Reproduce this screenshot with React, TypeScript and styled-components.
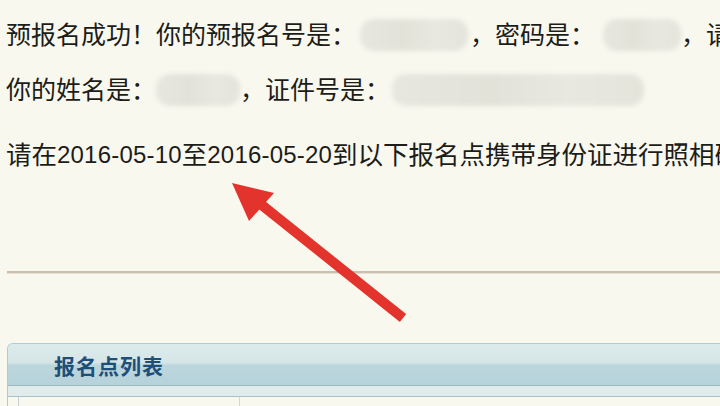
import React from "react";
import styled, { createGlobalStyle } from "styled-components";

const Global = createGlobalStyle`
  html, body { margin: 0; padding: 0; background: #f8f8ef; overflow: hidden; }
  body { width: 720px; height: 406px; }
`;

const Page = styled.div`
  position: relative;
  width: 720px;
  height: 406px;
  overflow: hidden;
  background: #f8f8ef;
  font-family: "Liberation Sans", "Noto Sans CJK SC", sans-serif;
  color: #1c1c18;
`;

const Content = styled.div`
  display: flex;
  flex-direction: column;
  padding-left: 6px;
`;

const Line = styled.div<{ $top: number; $size?: number }>`
  margin-top: ${(p) => p.$top}px;
  height: 30px;
  line-height: 30px;
  font-size: ${(p) => p.$size ?? 25}px;
  white-space: nowrap;
  display: flex;
  align-items: center;
`;

const DateText = styled.span`
  font-size: 24px;
  letter-spacing: 0.2px;
`;

const Blur = styled.span<{ $w: number; $ml: number; $mr: number }>`
  display: inline-block;
  flex: none;
  width: ${(p) => p.$w}px;
  height: 32px;
  margin-left: ${(p) => p.$ml}px;
  margin-right: ${(p) => p.$mr}px;
  border-radius: 14px;
  background: linear-gradient(90deg, #e8e7df 0%, #e3e2d9 40%, #e9e8e0 70%, #e5e4db 100%);
  filter: blur(2px);
`;

const Rule = styled.div`
  margin-top: 101px;
  margin-left: 1px;
  height: 2px;
  background: #cbbfae;
  border-bottom: 1px solid #e6dfd3;
`;

const Panel = styled.div`
  margin-top: 69px;
  margin-left: 1px;
  border: 1px solid #b3c9d1;
  border-right: none;
  border-top-left-radius: 6px;
  overflow: hidden;
`;

const PanelHead = styled.div`
  height: 41px;
  display: flex;
  align-items: center;
  padding-left: 46px;
  background: linear-gradient(180deg, #dceaea 0%, #d6e6e7 45%, #bcd6dd 52%, #b6d2da 100%);
  border-bottom: 1px solid #9dbac4;
`;

const PanelTitle = styled.span`
  font-family: "Noto Sans CJK SC", sans-serif;
  font-weight: 700;
  font-size: 21px;
  color: #1d4f78;
  letter-spacing: 1px;
`;

const PanelStrip = styled.div`
  height: 10px;
  background: #e0ecec;
  border-bottom: 1px solid #a9c1c9;
`;

const Table = styled.div`
  margin-left: 10px;
  display: grid;
  grid-template-columns: 221px 1fr;
  height: 20px;
  border-left: 1px solid #c4d2d6;
`;

const Cell = styled.div`
  border-right: 1px solid #d0d8d8;
`;

const Arrow = styled.svg`
  position: absolute;
  left: 0;
  top: 0;
  pointer-events: none;
`;

export default function App() {
  return (
    <Page>
      <Global />
      <Content>
        <Line $top={20}>
          预报名成功！你的预报名号是：
          <Blur $w={108} $ml={4} $mr={2} />
          ，密码是：
          <Blur $w={78} $ml={8} $mr={0} />
          ，请
        </Line>
        <Line $top={25}>
          你的姓名是：
          <Blur $w={84} $ml={0} $mr={0} />
          ，证件号是：
          <Blur $w={252} $ml={2} $mr={0} />
        </Line>
        <Line $top={35} $size={25.5}>
          请在<DateText>2016-05-10</DateText>至<DateText>2016-05-20</DateText>到以下报名点携带身份证进行照相确认
        </Line>
        <Rule />
        <Panel>
          <PanelHead>
            <PanelTitle>报名点列表</PanelTitle>
          </PanelHead>
          <PanelStrip />
          <Table>
            <Cell />
            <div />
          </Table>
        </Panel>
      </Content>
      <Arrow width="720" height="406" viewBox="0 0 720 406">
        <line x1="403" y1="318" x2="258" y2="202" stroke="#e2342c" strokeWidth="10" />
        <polygon points="232,183 274,193 249,221" fill="#e2342c" />
      </Arrow>
    </Page>
  );
}
